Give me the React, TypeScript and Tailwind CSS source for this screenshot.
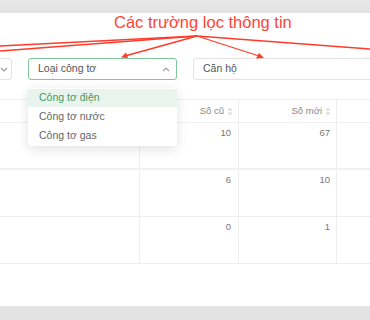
import React from 'react';

const font = { fontFamily: '"Liberation Sans", Arial, sans-serif' };

function SortIcon() {
  return (
    <svg width="6" height="9" viewBox="0 0 6 9" className="ml-[3px] shrink-0">
      <path d="M3 0.5 L5.5 3.5 H0.5 Z" fill="#dadada" />
      <path d="M3 8.5 L5.5 5.5 H0.5 Z" fill="#dadada" />
    </svg>
  );
}

function Chevron({ up }: { up?: boolean }) {
  return (
    <svg width="8" height="5" viewBox="0 0 8 5">
      <path d={up ? 'M1 4 L4 1 L7 4' : 'M1 1 L4 4 L7 1'} fill="none" stroke="#9a9a9a" strokeWidth="1.1" />
    </svg>
  );
}

const rows = [
  { old: '10', next: '67' },
  { old: '6', next: '10' },
  { old: '0', next: '1' },
];

export default function App() {
  return (
    <div className="relative w-[370px] h-[320px] overflow-hidden bg-white text-[#555]" style={font}>
      <div className="h-[13px] bg-gradient-to-b from-[#e9e9e9] to-[#e1e1e1]" />
      <div className="h-[293px] bg-white flex flex-col">
        {/* filters */}
        <div className="flex gap-4 mt-[45px] ml-[-138px] shrink-0">
          <div className="w-[150px] shrink-0 h-[22px] rounded-[3px] border border-[#e3e3e3] flex items-center justify-end pr-[3px]">
            <Chevron />
          </div>
          <div className="w-[149px] shrink-0 h-[22px] rounded-[3px] border border-[#7fc79c] flex items-center justify-between pl-[9px] pr-[6px] text-[10.5px] text-[#555]">
            <span>Loại công tơ</span>
            <Chevron up />
          </div>
          <div className="w-[200px] shrink-0 h-[22px] rounded-[3px] border border-[#e3e3e3] flex items-center pl-[9px] text-[10.5px] text-[#555]">
            Căn hộ
          </div>
        </div>

        {/* table */}
        <div className="mt-[19px] ml-[-60px] w-[460px] text-[9.5px] text-[#777]">
          <div className="flex h-[24px] border-t border-b border-[#eeeeee]">
            <div className="w-[200px] border-r border-[#eeeeee]" />
            <div className="w-[99px] border-r border-[#eeeeee] flex items-center justify-end pr-[5px] text-[#888]">
              Số cũ<SortIcon />
            </div>
            <div className="w-[98px] border-r border-[#eeeeee] flex items-center justify-end pr-[5px] text-[#888]">
              Số mới<SortIcon />
            </div>
            <div className="flex-1" />
          </div>
          {rows.map((r, i) => (
            <div key={i} className={`flex h-[47px] border-b ${i === 0 ? 'border-[#f0f0f0] border-b-2' : 'border-[#eeeeee]'}`}>
              <div className="w-[200px] border-r border-[#eeeeee]" />
              <div className="w-[99px] border-r border-[#eeeeee] text-right pr-[7px] pt-[3px]">{r.old}</div>
              <div className="w-[98px] border-r border-[#eeeeee] text-right pr-[6px] pt-[3px]">{r.next}</div>
              <div className="flex-1" />
            </div>
          ))}
        </div>
      </div>
      <div className="h-[14px] bg-[#e3e3e3]" />

      {/* dropdown menu */}
      <div className="absolute left-[28px] top-[88px] w-[149px] rounded-[4px] bg-white shadow-[0_3px_12px_rgba(0,0,0,0.12)] py-[1px] text-[10.5px]">
        <div className="h-[18px] bg-[#eaf4ee] text-[#3f9b62] flex items-center pl-[11px]">Công tơ điện</div>
        <div className="h-[19px] text-[#666] flex items-center pl-[11px]">Công tơ nước</div>
        <div className="h-[19px] text-[#666] flex items-center pl-[11px]">Công tơ gas</div>
      </div>

      {/* annotation */}
      <div className="absolute left-[114px] top-[10px] w-[165px] text-center text-[16.5px] text-[#ff4433] whitespace-nowrap">
        Các trường lọc thông tin
      </div>
      <svg className="absolute left-0 top-0" width="370" height="320" viewBox="0 0 370 320">
        <g stroke="#ff3b2b" strokeWidth="1.3" fill="none">
          <line x1="197" y1="36" x2="0" y2="46" />
          <line x1="197" y1="36" x2="0" y2="51" />
          <line x1="197" y1="36" x2="125" y2="56" />
          <line x1="197" y1="36" x2="259" y2="56" />
          <line x1="197" y1="36" x2="370" y2="49" />
        </g>
        <path d="M121 57.5 L126 52.5 L128 58 Z" fill="#ff3b2b" />
        <path d="M264 58 L256 58.5 L259 53 Z" fill="#ff3b2b" />
      </svg>
    </div>
  );
}
